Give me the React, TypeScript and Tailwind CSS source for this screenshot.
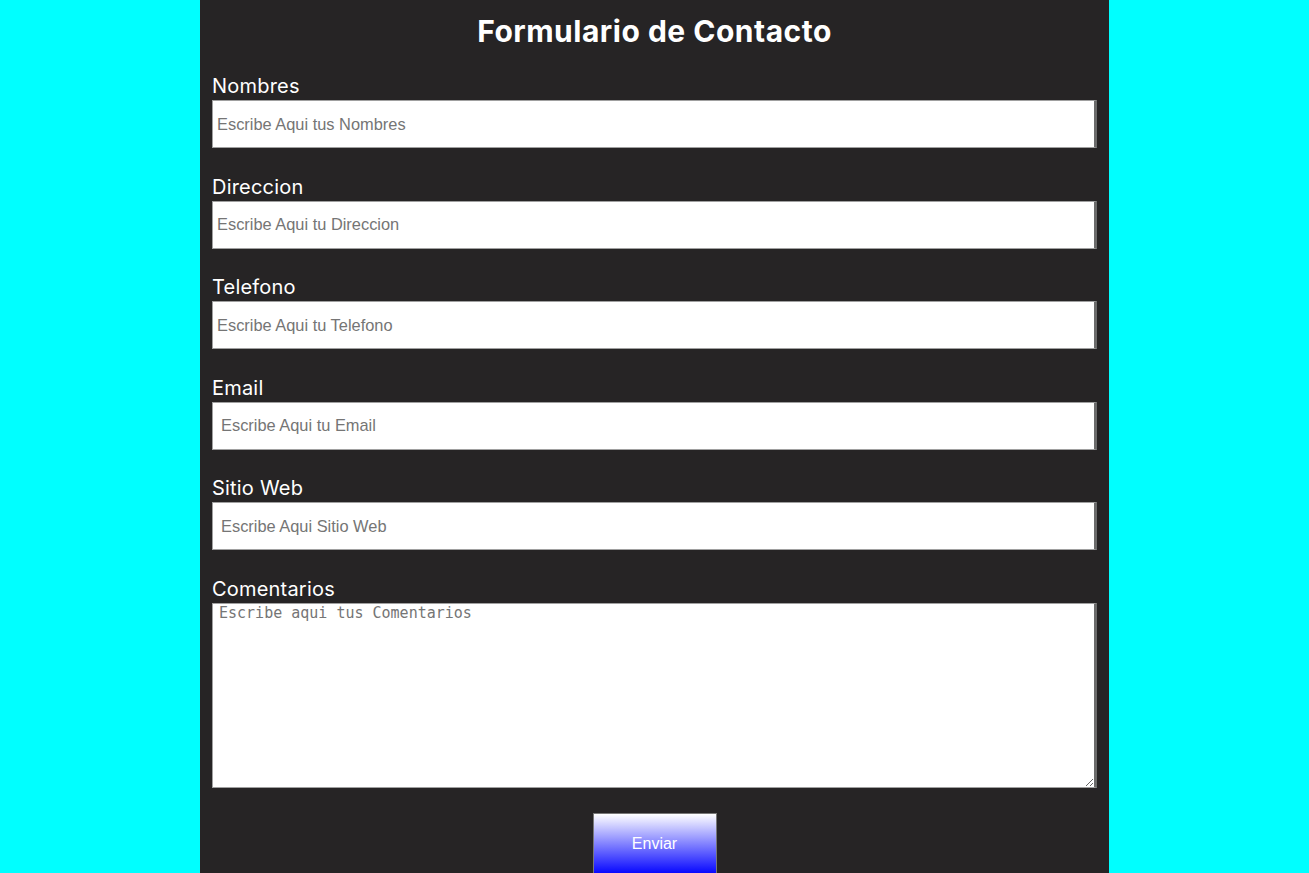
import type { ReactNode } from "react";

const labelFont = { fontFamily: "Inter, 'Noto Sans', sans-serif" };

const Field = ({ label, children }: { label: string; children: ReactNode }) => (
  <div className="flex flex-col">
    <label
      className="text-[20px] leading-[24px] text-white h-[28px] pt-[2px] tracking-[0.2px]"
      style={labelFont}
    >
      {label}
    </label>
    {children}
  </div>
);

const inputCls =
  "w-full h-[48px] bg-white border border-[#a0a0a0] border-r-[3px] border-r-[#6b6b6b] text-[16.4px] text-black placeholder:text-[#757575] outline-none font-['Liberation_Sans',Arial,sans-serif]";

export default function App() {
  return (
    <div className="min-h-screen bg-[#00ffff] flex justify-center">
      <div className="w-[909px] bg-[#262425] px-[12px] flex flex-col">
        <h1
          className="text-center text-white font-bold text-[30px] leading-[34px] pt-[14px] pb-[24px] tracking-[0.5px]"
          style={labelFont}
        >
          Formulario de Contacto
        </h1>
        <form className="flex flex-col gap-[24.6px]">
          <Field label="Nombres">
            <input className={`${inputCls} pl-[4px]`} placeholder="Escribe Aqui tus Nombres" />
          </Field>
          <Field label="Direccion">
            <input className={`${inputCls} pl-[4px]`} placeholder="Escribe Aqui tu Direccion" />
          </Field>
          <Field label="Telefono">
            <input className={`${inputCls} pl-[4px]`} placeholder="Escribe Aqui tu Telefono" />
          </Field>
          <Field label="Email">
            <input className={`${inputCls} pl-[8px]`} placeholder="Escribe Aqui tu Email" />
          </Field>
          <Field label="Sitio Web">
            <input className={`${inputCls} pl-[8px]`} placeholder="Escribe Aqui Sitio Web" />
          </Field>
          <Field label="Comentarios">
            <textarea
              className="w-full h-[185px] bg-white border border-[#a0a0a0] border-r-[3px] border-r-[#6b6b6b] px-[6px] pt-0 text-[15px] leading-[18px] text-black placeholder:text-[#757575] outline-none font-['DejaVu_Sans_Mono',monospace]"
              placeholder="Escribe aqui tus Comentarios"
            />
          </Field>
          <div className="flex justify-center">
            <button
              type="button"
              className="w-[124px] h-[62px] border-t border-x border-[#777] bg-[linear-gradient(to_bottom,#ffffff,#0000ff)] text-white text-[16px] font-['Liberation_Sans',Arial,sans-serif]"
            >
              Enviar
            </button>
          </div>
        </form>
      </div>
    </div>
  );
}
